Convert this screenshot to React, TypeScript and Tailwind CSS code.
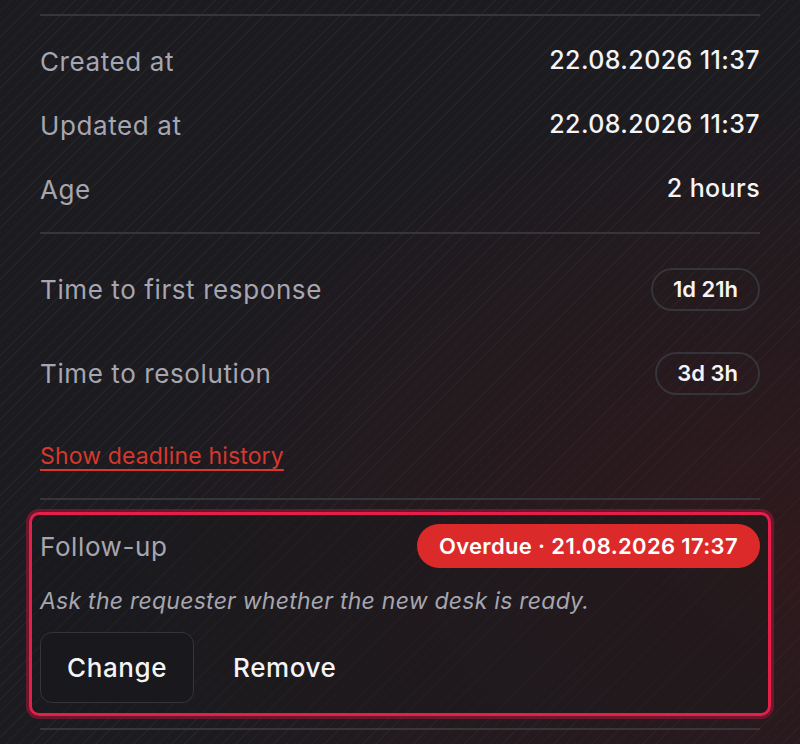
import React from "react";

const font = { fontFamily: "Inter, 'Liberation Sans', sans-serif" };

function Row({ label, value }: { label: string; value: string }) {
  return (
    <div className="flex h-[64px] items-center justify-between">
      <span className="text-[26px] tracking-[0.6px] text-[#a6a6b0]">{label}</span>
      <span className="text-[25px] font-medium tracking-[0.4px] text-[#f4f4f6]">{value}</span>
    </div>
  );
}

function PillRow({ label, value }: { label: string; value: string }) {
  return (
    <div className="flex h-[84px] items-center justify-between">
      <span className="text-[26px] tracking-[0.6px] text-[#a6a6b0]">{label}</span>
      <span className="flex h-[43px] items-center rounded-full border-2 border-[#34343b] px-[20px] text-[22px] font-semibold text-[#f4f4f6]">
        {value}
      </span>
    </div>
  );
}

export default function App() {
  return (
    <div
      style={font}
      className="min-h-[744px] w-full bg-[#1c1b20] [background-image:radial-gradient(ellipse_at_100%_75%,rgba(70,22,24,0.45),transparent_60%),repeating-linear-gradient(135deg,transparent_0px,transparent_8px,rgba(255,255,255,0.035)_8px,rgba(255,255,255,0.035)_9px)] px-[40px] pt-[14px]"
    >
      <div className="border-t-2 border-[#36353c] pt-[13px] pb-[11px]">
        <Row label="Created at" value="22.08.2026 11:37" />
        <Row label="Updated at" value="22.08.2026 11:37" />
        <Row label="Age" value="2 hours" />
      </div>
      <div className="border-t-2 border-[#36353c] pt-[13px]">
        <PillRow label="Time to first response" value="1d 21h" />
        <PillRow label="Time to resolution" value="3d 3h" />
        <div className="flex h-[83px] items-center">
          <a
            href="#"
            className="text-[23px] tracking-[0.15px] text-[#d8372d] underline decoration-2 underline-offset-[5px]"
          >
            Show deadline history
          </a>
        </div>
      </div>
      <div className="border-t-2 border-[#36353c] pt-[12px] pb-[12px]">
        <div className="-mx-[11px] rounded-[10px] border-[3px] border-[#e51e4a] bg-[#19181c]/40 px-[8px] pt-[9px] pb-[10px] shadow-[0_0_0_3px_rgba(125,22,48,0.8)]">
          <div className="flex h-[44px] items-center justify-between">
            <span className="text-[26px] tracking-[0.6px] text-[#a6a6b0]">Follow-up</span>
            <span className="flex h-[44px] items-center rounded-full bg-[#dc2a2a] px-[22px] text-[22px] font-semibold tracking-[0.35px] text-white">
              Overdue · 21.08.2026 17:37
            </span>
          </div>
          <p className="mt-[20px] text-[23px] leading-[26px] italic tracking-[0.25px] text-[#a6a6b0]">
            Ask the requester whether the new desk is ready.
          </p>
          <div className="mt-[18px] flex gap-[13px]">
            <button className="flex h-[71px] items-center rounded-[12px] border-[1.5px] border-[#34343b] bg-[#19181d] px-[26px] text-[26px] font-medium tracking-[0.6px] text-[#f4f4f6]">
              Change
            </button>
            <button className="flex h-[71px] items-center rounded-[12px] px-[26px] text-[26px] font-medium tracking-[0.6px] text-[#f4f4f6]">
              Remove
            </button>
          </div>
        </div>
      </div>
      <div className="border-t-2 border-[#36353c] h-[14px]" />
    </div>
  );
}
